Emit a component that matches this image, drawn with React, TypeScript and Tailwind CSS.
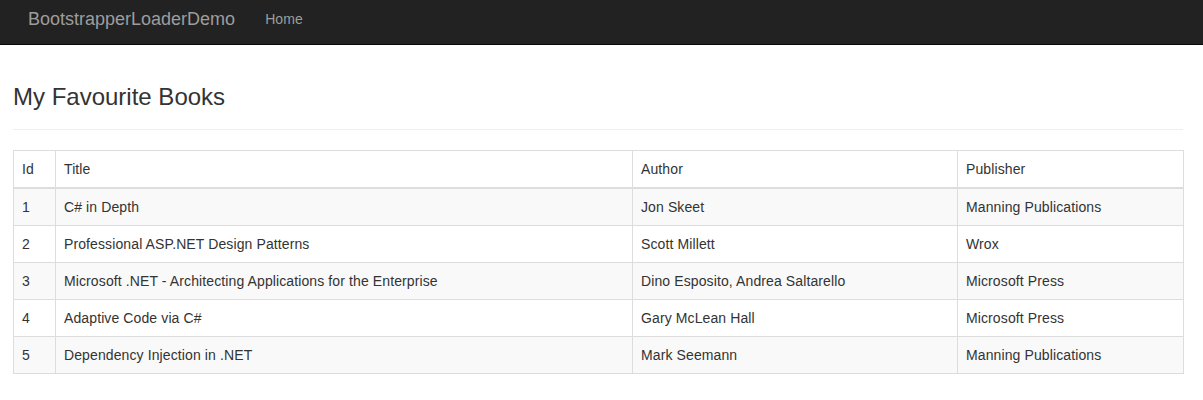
import React from "react";

interface Book {
  id: number;
  title: string;
  author: string;
  publisher: string;
}

const books: Book[] = [
  { id: 1, title: "C# in Depth", author: "Jon Skeet", publisher: "Manning Publications" },
  { id: 2, title: "Professional ASP.NET Design Patterns", author: "Scott Millett", publisher: "Wrox" },
  { id: 3, title: "Microsoft .NET - Architecting Applications for the Enterprise", author: "Dino Esposito, Andrea Saltarello", publisher: "Microsoft Press" },
  { id: 4, title: "Adaptive Code via C#", author: "Gary McLean Hall", publisher: "Microsoft Press" },
  { id: 5, title: "Dependency Injection in .NET", author: "Mark Seemann", publisher: "Manning Publications" },
];

const App: React.FC = () => {
  return (
    <div className="min-h-screen bg-white text-[#333] font-['Liberation_Sans',Arial,sans-serif]">
      {/* navbar */}
      <div className="h-[45px] bg-[#222] border-b border-[#080808]">
        <div className="flex items-start pt-[9px] pl-[28px] leading-[20px]">
          <a className="text-[18px] text-[#9d9d9d]">BootstrapperLoaderDemo</a>
          <a className="ml-[30px] text-[14px] tracking-[0.1px] text-[#9d9d9d]">Home</a>
        </div>
      </div>

      <div className="w-[1170px] ml-[13px]">
        <h2 className="mt-[39px] text-[24px] leading-[26px] font-normal">My Favourite Books</h2>
        <hr className="mt-[19px] mb-[20px] border-0 border-t border-[#eee]" />

        <table className="w-full table-fixed border-collapse border border-[#ddd] text-[14px] leading-[20px] tracking-[0.11px]">
          <colgroup>
            <col className="w-[42px]" />
            <col className="w-[577px]" />
            <col className="w-[325px]" />
            <col className="w-[226px]" />
          </colgroup>
          <thead>
            <tr>
              <th className="text-left font-normal p-[8px] border border-[#ddd] border-b-2">Id</th>
              <th className="text-left font-normal p-[8px] border border-[#ddd] border-b-2">Title</th>
              <th className="text-left font-normal p-[8px] border border-[#ddd] border-b-2">Author</th>
              <th className="text-left font-normal p-[8px] border border-[#ddd] border-b-2">Publisher</th>
            </tr>
          </thead>
          <tbody>
            {books.map((book, i) => (
              <tr key={book.id} className={i % 2 === 0 ? "bg-[#f9f9f9]" : "bg-white"}>
                <td className="p-[8px] border border-[#ddd]">{book.id}</td>
                <td className="p-[8px] border border-[#ddd]">{book.title}</td>
                <td className="p-[8px] border border-[#ddd]">{book.author}</td>
                <td className="p-[8px] border border-[#ddd]">{book.publisher}</td>
              </tr>
            ))}
          </tbody>
        </table>
      </div>
    </div>
  );
};

export default App;
